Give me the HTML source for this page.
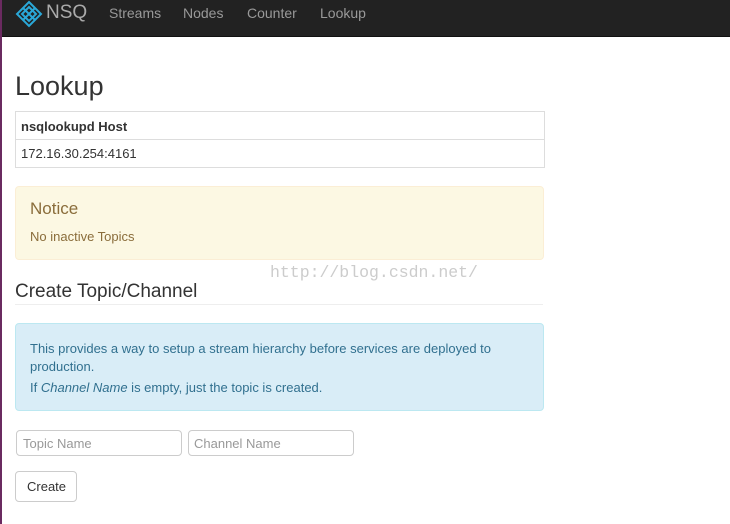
<!DOCTYPE html>
<html><head><style>
body{margin:0;width:730px;height:524px;overflow:hidden;background:#fff;font-family:"Liberation Sans",sans-serif;color:#333;position:relative}
.lb{position:absolute;left:0;top:0;width:2px;height:524px;background:#6a2a60}
.nav{position:absolute;left:0;top:0;width:730px;height:36px;background:#222;border-bottom:1px solid #111}
.nav span{position:absolute;top:5px;font-size:14px;color:#999}
.abs{position:absolute}
</style></head><body>
<div class="nav">
<svg class="abs" style="left:15px;top:0px" width="28" height="28" viewBox="0 0 28 28"><g fill="none" stroke="#2aa8d8" stroke-width="2"><path d="M14 2L26 14 14 26 2 14Z"/><path d="M14 7L21 14 14 21 7 14Z"/><path d="M8 8L20 20M20 8L8 20"/></g></svg>
<span style="left:46px;top:2px;font-size:19px;color:#aaa">NSQ</span>
<span style="left:109px">Streams</span>
<span style="left:183px">Nodes</span>
<span style="left:247px">Counter</span>
<span style="left:320px">Lookup</span>
</div>
<div class="lb"></div>
<div class="abs" style="left:15px;top:71px;font-size:27px">Lookup</div>
<div class="abs" style="left:15px;top:111px;width:528px;height:55px;border:1px solid #ddd"></div>
<div class="abs" style="left:16px;top:139px;width:528px;border-top:1px solid #ddd"></div>
<div class="abs" style="left:21px;top:119px;font-size:13px;font-weight:bold">nsqlookupd Host</div>
<div class="abs" style="left:21px;top:146px;font-size:13px">172.16.30.254:4161</div>
<div class="abs" style="left:15px;top:186px;width:527px;height:72px;background:#fcf8e3;border:1px solid #fbeed5;border-radius:4px"></div>
<div class="abs" style="left:30px;top:199px;font-size:17px;color:#8a6d3b">Notice</div>
<div class="abs" style="left:30px;top:229px;font-size:13px;color:#8a6d3b">No inactive Topics</div>
<div class="abs" style="left:270px;top:263px;font-size:16.5px;color:#ccc;font-family:'Liberation Mono',monospace">http://blog.csdn.net/</div>
<div class="abs" style="left:15px;top:281px;font-size:19px">Create Topic/Channel</div>
<div class="abs" style="left:15px;top:304px;width:528px;border-top:1px solid #eee"></div>
<div class="abs" style="left:15px;top:323px;width:527px;height:86px;background:#d9edf7;border:1px solid #bce8f1;border-radius:4px"></div>
<div class="abs" style="left:30px;top:340px;width:480px;font-size:13px;line-height:18px;color:#31708f">This provides a way to setup a stream hierarchy before services are deployed to production.</div>
<div class="abs" style="left:30px;top:380px;font-size:13px;color:#31708f">If <i>Channel Name</i> is empty, just the topic is created.</div>
<div class="abs" style="left:16px;top:430px;width:164px;height:24px;border:1px solid #ccc;border-radius:4px"></div>
<div class="abs" style="left:188px;top:430px;width:164px;height:24px;border:1px solid #ccc;border-radius:4px"></div>
<div class="abs" style="left:23px;top:436px;font-size:13px;color:#999">Topic Name</div>
<div class="abs" style="left:194px;top:436px;font-size:13px;color:#999">Channel Name</div>
<div class="abs" style="left:15px;top:471px;width:60px;height:29px;border:1px solid #ccc;border-radius:4px"></div>
<div class="abs" style="left:27px;top:479px;font-size:13px">Create</div>
</body></html>
